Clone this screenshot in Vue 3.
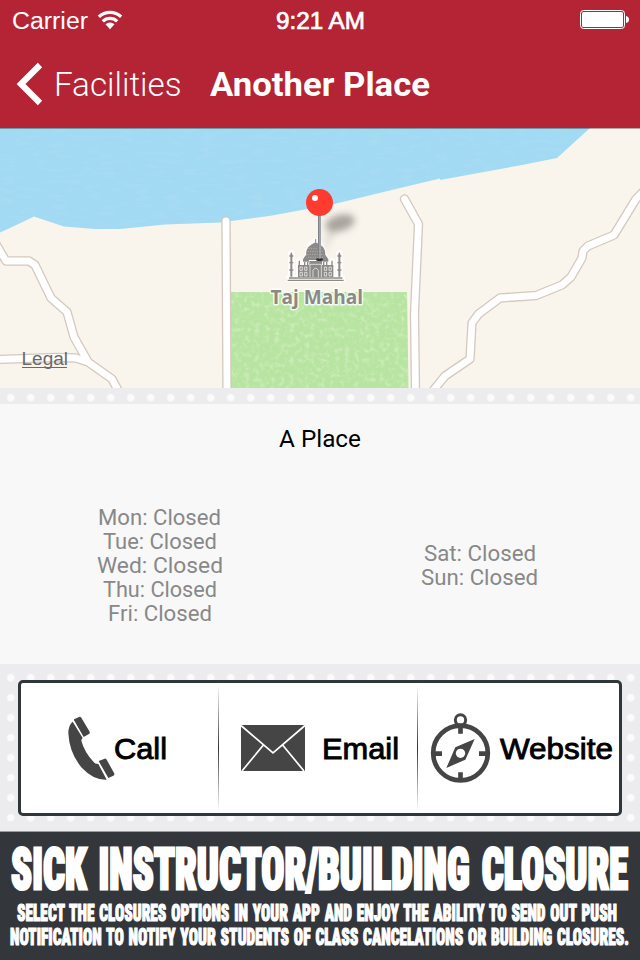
<script setup>
import { h } from 'vue'

// One line of text set to an exact measure; sx condenses the letters.
const FitText = (props) => {
  const sx = props.sx || 1
  return h('svg', { width: props.w, height: props.h, viewBox: `0 0 ${props.w} ${props.h}` }, [
    h('text', {
      x: 0,
      y: props.base,
      transform: sx === 1 ? undefined : `scale(${sx} 1)`,
      textLength: props.w / sx,
      lengthAdjust: 'spacingAndGlyphs',
    }, props.text),
  ])
}
FitText.props = ['text', 'w', 'h', 'base', 'sx']

const weekdays = [
  { text: 'Mon: Closed', w: 123 },
  { text: 'Tue: Closed', w: 114 },
  { text: 'Wed: Closed', w: 126 },
  { text: 'Thu: Closed', w: 114 },
  { text: 'Fri: Closed', w: 104 },
]
const weekend = [
  { text: 'Sat: Closed', w: 112 },
  { text: 'Sun: Closed', w: 117 },
]

const roads = [
  '-4,116 0,123 6,133 29,133 35,137 51,170 67,184 74,209 87,232',
  '-4,231.5 55,229.5 76,230 88,234 112,251 119,264',
  '226,93 227,264',
  '404.5,71 418.5,96 414.5,185 415.5,264',
  '644,63 636,71 614,107 588,118 583,123 582,130 571,149 562,157 536,167.5 500,170 478.5,186 472,195 470,231 445,248 432,264',
]
</script>

<template>
  <div class="screen">
    <header class="top">
      <div class="status">
        <div class="carrier">
          <FitText class="thin" text="Carrier" :w="76" :h="40" :base="29" />
          <svg class="wifi" width="26" height="20" viewBox="293 30 78 60">
            <g fill="none" stroke="#fff" stroke-width="10">
              <path d="M298.500 50A50 50 0 0 1 365.500 50" />
              <path d="M310.500 64A31 31 0 0 1 353.500 64" />
            </g>
            <path d="M332 88L318.500 73A20 20 0 0 1 345.500 73Z" fill="#fff" />
          </svg>
        </div>
        <FitText class="clock" text="9:21 AM" :w="89" :h="40" :base="29" />
        <svg class="battery" width="50" height="20" viewBox="0 0 50 20">
          <rect x=".5" y=".5" width="44" height="18" rx="3" fill="none" stroke="#fff" />
          <rect x="2" y="2" width="41" height="15" rx="1.500" fill="#fff" />
          <path d="M46 6Q49 6.500 49 9.500T46 13Z" fill="#fff" />
        </svg>
      </div>
      <nav class="nav">
        <svg class="back" width="28" height="44" viewBox="0 0 28 44">
          <path d="M25 3L6 22L25 41" fill="none" stroke="#fff" stroke-width="6.200" />
        </svg>
        <FitText class="parent" text="Facilities" :w="127.5" :h="60" :base="40" />
        <FitText class="title" text="Another Place" :w="220" :h="60" :base="40" />
      </nav>
    </header>

    <svg class="map" width="640" height="260" viewBox="0 0 640 260">
      <defs>
        <filter id="grass" x="0" y="0" width="100%" height="100%">
          <feTurbulence type="fractalNoise" baseFrequency=".2" numOctaves="3" seed="4" />
          <feColorMatrix values="0 0 0 0 .87  0 0 0 0 .96  0 0 0 0 .8  0 0 0 3 -1.400" />
          <feComposite in2="SourceGraphic" operator="in" />
        </filter>
        <filter id="waves" x="0" y="0" width="100%" height="100%">
          <feTurbulence type="fractalNoise" baseFrequency=".06 .25" numOctaves="2" seed="9" />
          <feColorMatrix values="0 0 0 0 .5  0 0 0 0 .76  0 0 0 0 .88  0 0 0 1.600 -.75" />
          <feComposite in2="SourceGraphic" operator="in" />
        </filter>
        <filter id="soft" x="-50%" y="-100%" width="200%" height="300%"><feGaussianBlur stdDeviation="3.500" /></filter>
        <path id="sea" d="M0 0V104.500L10 100L34 88.500L64 98.500L95 101H120L165 96.500L220 94.500L272 87.500L333 76.300L400 60L440 50.500V52L522 37L557 30L590 0Z" />
        <path id="park" d="M230 164H407L408.500 260H231Z" />
      </defs>
      <rect width="640" height="260" fill="#f9f4ec" />
      <use href="#sea" fill="#a2daf3" />
      <use href="#sea" filter="url(#waves)" opacity=".4" />
      <use href="#park" fill="#b7e4a0" />
      <use href="#park" filter="url(#grass)" opacity=".35" />
      <g fill="none" stroke-linecap="round" stroke-linejoin="round">
        <polyline v-for="r in roads" :key="r" :points="r" stroke="#d3c9be" stroke-width="9.400" />
        <polyline v-for="r in roads" :key="'f' + r" :points="r" stroke="#fff" stroke-width="6.800" />
      </g>
      <rect width="640" height="1" fill="#000" opacity=".3" />

      <g transform="translate(220 42) scale(.33333)">
        <path d="M203 333V320H208V248L214 244L220 248V320H232V272L238 268L244 282L258 254Q258 220 287 208Q316 220 316 254L330 282L336 268L342 272V320H352V248L358 244L364 248V320H371V333Z" fill="#fff" stroke="#fff" stroke-width="8" stroke-linejoin="round" opacity=".85" />
        <g fill="#8c8a87">
          <path d="M203 329h168v4H203zM207 322h160v4H207z" />
          <path d="M285.500 207h3v14h-3zM264 270Q252 248 265 231Q275 222 287 217Q299 222 309 231Q322 248 310 270Z" />
          <path d="M211 252l3-6 3 6v68h-6zM355 252l3-6 3 6v68h-6zM208 256h12v4h-12zM208 276h12v4h-12zM208 298h12v4h-12zM352 256h12v4h-12zM352 276h12v4h-12zM352 298h12v4h-12z" />
          <path d="M236 272h4v14h-4zM334 272h4v14h-4zM249 268l9-14 9 14v7h-18zM307 268l9-14 9 14v7h-18zM252 276h4v9h-4zM261 276h4v9h-4zM309 276h4v9h-4zM318 276h4v9h-4z" />
          <path d="M234 285h34v-12h38v12h34v36h-106z" />
        </g>
        <g fill="none" stroke="#fff" stroke-width="2">
          <path d="M279 321v-20q8-13 16 0v20M270 321v-38h34v38M240 301v-10h7v10zM254 301v-10h7v10zM240 318v-11h7v11zM254 318v-11h7v11zM313 301v-10h7v10zM327 301v-10h7v10zM313 318v-11h7v11zM327 318v-11h7v11z" />
          <path d="M266 235h42M263 244h48M262 253h50M264 262h46" stroke-width="1.500" stroke-dasharray="3 4" opacity=".7" />
        </g>
      </g>
      <text class="place" x="270.500" y="176" textLength="92.500" lengthAdjust="spacingAndGlyphs">Taj Mahal</text>

      <ellipse cx="340" cy="95" rx="15" ry="8" transform="rotate(-15 340 95)" fill="#5a564f" opacity=".5" filter="url(#soft)" />
      <path d="M322 128L329 102L337 100Z" fill="#8a857c" opacity=".3" filter="url(#soft)" />
      <ellipse cx="319.500" cy="131.500" rx="3.500" ry="1.500" fill="#333" />
      <path d="M318 86h3v44q-1.500 1.500-3 0z" fill="#a2a3a8" />
      <path d="M318 86h1v44h-1z" fill="#808187" />
      <circle cx="319.500" cy="74.500" r="13.500" fill="#ff3b30" />
      <circle cx="315" cy="70" r="3" fill="#fff" />

      <text class="legal" x="21.500" y="237" textLength="46.500" lengthAdjust="spacingAndGlyphs">Legal</text>
      <rect x="22" y="239" width="45" height="1" fill="#6b6967" />
    </svg>

    <div class="strip"></div>

    <section class="info">
      <FitText class="name" text="A Place" :w="82" :h="30" :base="23" />
      <div class="hours">
        <div class="days">
          <FitText v-for="d in weekdays" :key="d.text" :text="d.text" :w="d.w" :h="24" :base="19" />
        </div>
        <div class="days">
          <FitText v-for="d in weekend" :key="d.text" :text="d.text" :w="d.w" :h="24" :base="19" />
        </div>
      </div>
    </section>

    <section class="actions">
      <div class="box">
        <div class="action call">
          <svg width="48.700" height="66.700" viewBox="200 165 146 200" fill="#454545">
            <path d="M217 185Q204 195 204 220Q207 280 245 324Q280 361 319 359L294 312Q283 312 280 306Q252 276 243 242Q243 237 247 234Z" />
            <path d="M222 182Q219 178 223 177L236 171Q240 169 243 173L267 214Q270 219 266 222L250 231ZM297 307Q294 304 297 302L313 296Q317 295 319 299L341 339Q344 344 339 347L324 354Z" />
          </svg>
          <FitText class="label" text="Call" :w="53" :h="40" :base="30.5" />
        </div>
        <div class="action email">
          <svg width="64" height="46" viewBox="0 0 64 46">
            <rect width="64" height="46" fill="#454545" />
            <path d="M0 .5L32 28L64 .5M1 46L22 20.500M63 46L42 20.500" fill="none" stroke="#fff" stroke-width="1.700" />
          </svg>
          <FitText class="label" text="Email" :w="77" :h="40" :base="30.5" />
        </div>
        <div class="action website">
          <svg width="61" height="71.300" viewBox="330 157 183 214" fill="none" stroke="#454545">
            <circle cx="421.500" cy="280" r="82" stroke-width="14" />
            <circle cx="421.500" cy="181" r="15.500" stroke-width="9" />
            <path d="M421.500 195v27M421.500 338v25M340 282h26M477 282h26" stroke-width="14" />
            <path d="M464 238L436 300L379 325L406 263Z" fill="#454545" stroke="none" />
            <circle cx="421.500" cy="281" r="14" fill="#fff" stroke="none" />
          </svg>
          <FitText class="label" text="Website" :w="113" :h="40" :base="30.5" />
        </div>
      </div>
    </section>

    <footer class="banner">
      <FitText class="headline" text="SICK INSTRUCTOR/BUILDING CLOSURE" :w="617" :h="70" :base="57" :sx=".66" />
      <FitText class="small first" text="SELECT THE CLOSURES OPTIONS IN YOUR APP AND ENJOY THE ABILITY TO SEND OUT PUSH" :w="600" :h="24" :base="19" :sx=".65" />
      <FitText class="small" text="NOTIFICATION TO NOTIFY YOUR STUDENTS OF CLASS CANCELATIONS OR BUILDING CLOSURES." :w="619" :h="24" :base="19" :sx=".65" />
    </footer>
  </div>
</template>

<style>
body { margin: 0; }
</style>

<style scoped>
.screen { width: 640px; height: 960px; display: flex; flex-direction: column; overflow: hidden; background: #f8f8f8; font-family: Roboto, sans-serif; }
svg { display: block; flex: none; overflow: visible; }
.top { height: 128px; flex: none; background: #b42435; fill: #fff; }
.status { height: 40px; display: grid; grid-template-columns: 275.500px 304.500px 60px; align-items: center; font-family: "Liberation Sans", sans-serif; font-size: 23.500px; }
.carrier { display: flex; align-items: center; gap: 9.500px; padding-left: 11.500px; }
.wifi { margin-bottom: 1px; }
.clock { stroke: #fff; stroke-width: .7px; }
.nav { height: 88px; display: flex; align-items: center; padding-left: 15px; box-sizing: border-box; }
.parent { margin: 4px 0 0 10.500px; font-size: 34px; font-weight: 300; }
.title { margin: 4px 0 0 29px; font-size: 34px; font-weight: 700; }
.map { overflow: hidden; }
.place { font: 700 20px "Open Sans", sans-serif; fill: #8b8986; stroke: #fff; stroke-width: 3px; stroke-opacity: .85; stroke-linejoin: round; paint-order: stroke; }
.legal { font: 18px "Liberation Sans", sans-serif; fill: #6b6967; }
.strip, .actions { flex: none; background-color: #ececee; background-image: radial-gradient(circle at 10px 10px, #fbfbfb 3.300px, #ececee 4.200px); background-size: 20px 20px; }
.strip { height: 16px; background-position: .7px -.3px; }
.info { height: 260px; flex: none; display: flex; flex-direction: column; align-items: center; box-sizing: border-box; padding-top: 20px; }
.name { font-size: 24px; fill: #000; }
.hours { width: 640px; height: 120px; margin-top: 52px; display: grid; grid-template-columns: 319px 321px; align-items: center; font-size: 22.500px; fill: #888; }
.days { display: flex; flex-direction: column; align-items: center; }
.actions { height: 168px; box-sizing: border-box; padding: 16px 18px; background-position: .7px 3.700px; border-bottom: 1px solid #9b9b9d; }
.box { width: 604px; height: 136px; box-sizing: border-box; border: 3px solid #30373a; border-radius: 5px; background: #fff; display: grid; grid-template-columns: 198px 199px 201px; }
.action { display: flex; align-items: center; box-sizing: border-box; }
.call, .email { border-right: 1px solid; border-image: linear-gradient(#fff 2%, #333 50%, #fff 98%) 1; }
.call { padding-left: 46px; }
.email { padding-left: 22px; gap: 17px; }
.website { padding-left: 12px; gap: 8.500px; }
.website svg:first-child { margin-bottom: 1px; }
.label { font: 30px "Liberation Sans", sans-serif; fill: #000; stroke: #000; stroke-width: .9px; }
.call .label { margin-left: -1.500px; }
.banner { height: 128px; flex: none; background: #33363b; display: flex; flex-direction: column; align-items: flex-start; padding-left: 10.500px; box-sizing: border-box; fill: #fff; stroke: #fff; font-weight: 900; font-stretch: 75%; }
.headline { font-size: 57px; stroke-width: 3px; word-spacing: 5px; }
.small { font-size: 23.500px; stroke-width: 1.200px; word-spacing: 2px; margin-left: -1px; }
.small.first { margin-left: 6px; }
</style>
